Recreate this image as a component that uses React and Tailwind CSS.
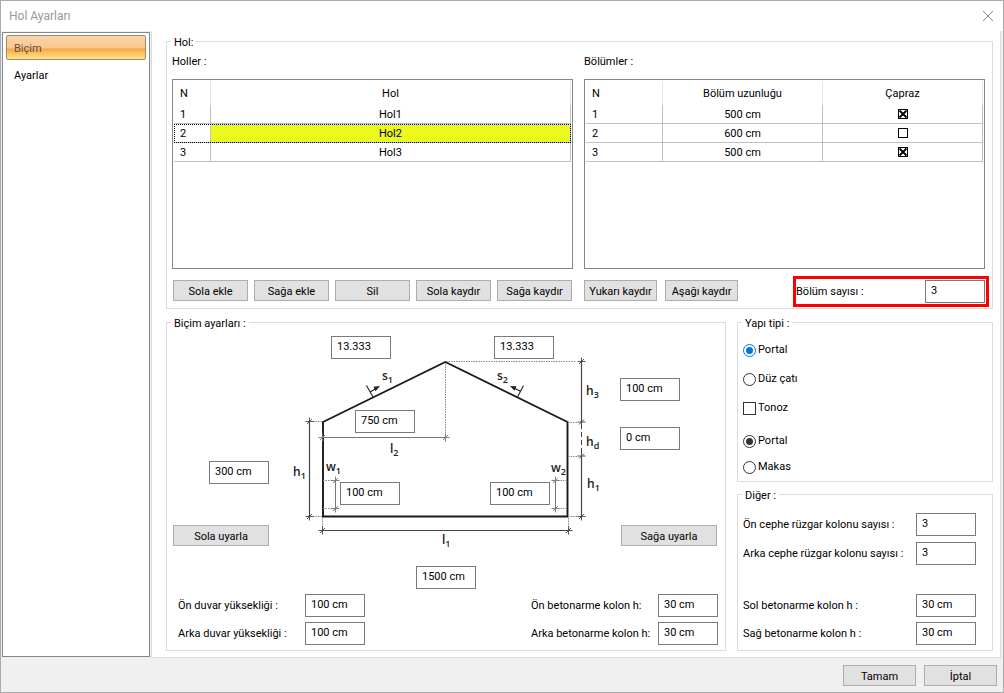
import { useState } from 'react';

const initialHalls = ['Hol1', 'Hol2', 'Hol3'];

const initialSections = [
  { length: '500 cm', cross: true },
  { length: '600 cm', cross: false },
  { length: '500 cm', cross: true },
];

function Button({ className = '', children }) {
  return (
    <button
      type="button"
      className={`h-[21px] border border-[#adadad] bg-[#e1e1e1] pt-[2px] text-center whitespace-nowrap hover:border-[#0078d7] hover:bg-[#e5f1fb] ${className}`}
    >
      {children}
    </button>
  );
}

function Field({ id, label, value, className = '' }) {
  return (
    <input
      id={id}
      type="text"
      aria-label={label}
      defaultValue={value}
      className={`h-[23px] w-[60px] shrink-0 border border-[#7a7a7a] bg-white px-[5px] pb-[2px] outline-none focus:border-[#0078d7] ${className}`}
    />
  );
}

function FieldRow({ id, label, value }) {
  return (
    <div className="flex items-center justify-between">
      <label htmlFor={id}>{label}</label>
      <Field id={id} value={value} />
    </div>
  );
}

function Group({ title, className = '', children }) {
  return (
    <fieldset className={`min-w-0 border border-[#dcdcdc] ${className}`}>
      <legend className="ml-1 px-[3px] pt-[2px] leading-[13px]">{title}</legend>
      {children}
    </fieldset>
  );
}

function Radio({ name, label, accent, defaultChecked }) {
  return (
    <label className="flex h-[14px] items-center gap-[2px]">
      <input
        type="radio"
        name={name}
        defaultChecked={defaultChecked}
        className={`size-[13px] appearance-none rounded-full border border-[#333] bg-white bg-clip-content p-[2px] ${
          accent ? 'checked:border-[#0078d7] checked:bg-[#0078d7]' : 'checked:bg-[#333]'
        }`}
      />
      {label}
    </label>
  );
}

function CrossBox({ label, checked, onChange }) {
  return (
    <span className="mx-auto grid size-[10px]">
      <input
        type="checkbox"
        aria-label={label}
        checked={checked}
        onChange={onChange}
        className="col-start-1 row-start-1 size-[10px] appearance-none border border-black bg-white"
      />
      {checked && (
        <svg viewBox="0 0 10 10" className="pointer-events-none col-start-1 row-start-1 size-[10px]">
          <path d="M1.5 1.5l7 7M8.5 1.5l-7 7" stroke="black" strokeWidth="1.8" />
        </svg>
      )}
    </span>
  );
}

// Crossed end mark of a dimension line
function Tick({ x, y }) {
  return <path d={`M${x - 4} ${y}h8M${x} ${y - 4}v8M${x - 2.5} ${y + 2.5}l5 -5`} strokeWidth="0.9" />;
}

function Sub({ x, y, text, sub }) {
  return (
    <text x={x} y={y}>
      {text}
      <tspan dy="3" fontSize="9">{sub}</tspan>
    </text>
  );
}

function HallDrawing() {
  return (
    <svg viewBox="269 336 351 253" className="h-full w-full" fill="none" stroke="#444">
      <path d="M323 516.5V422L445.3 362L567.5 422V516.5Z" stroke="#1a1a1a" strokeWidth="1.9" />

      {/* helper lines */}
      <g stroke="#888" strokeDasharray="1.5 1">
        <path d="M446 361.5H576M445.5 364V437" />
        <path d="M313 421.5H323M313 516.5H322M568 422.5H577M568 456.5H577M568 516.5H577" />
        <path d="M323 480.5H333M323 508.5H333M558 480.5H567M558 508.5H567" />
        <path d="M322.5 518V529M568.5 518V529" />
      </g>

      {/* dimension lines */}
      <path d="M309.5 421V517M322 530.5H568M581.5 361V422M581.5 456V517" strokeWidth="1.2" />
      <path d="M323 437.5H446M335.5 481V508M555.5 481V508" stroke="#777" />
      <path d="M581.5 424V455" strokeDasharray="5 3" />
      <Tick x={309.5} y={421.5} />
      <Tick x={309.5} y={516.5} />
      <Tick x={322.5} y={530.5} />
      <Tick x={568.5} y={530.5} />
      <Tick x={581.5} y={361.5} />
      <Tick x={581.5} y={422} />
      <Tick x={581.5} y={456} />
      <Tick x={581.5} y={516.5} />
      <g stroke="#777">
        <Tick x={322.5} y={437.5} />
        <Tick x={445.5} y={437.5} />
        <Tick x={335.5} y={480.5} />
        <Tick x={335.5} y={508.5} />
        <Tick x={555.5} y={480.5} />
        <Tick x={555.5} y={508.5} />
      </g>

      {/* slope marks */}
      <path d="M366.5 385.5L373 397M370 392L376 388.5M523.5 385.5L517.5 397M521 391.5L515 388.5" stroke="#222" strokeWidth="1.1" />
      <path d="M380 386L373.5 386.8L375.5 391.2ZM510 386L516.5 386.3L514.5 390.8Z" fill="#222" stroke="none" />

      <g fill="#222" stroke="none" fontSize="12" className="font-['Open_Sans',sans-serif] font-semibold">
        <Sub x={382} y={380} text="s" sub="1" />
        <Sub x={497} y={380} text="s" sub="2" />
        <Sub x={390} y={453} text="l" sub="2" />
        <Sub x={293} y={476} text="h" sub="1" />
        <Sub x={326} y={471} text="w" sub="1" />
        <Sub x={551} y={472} text="w" sub="2" />
        <Sub x={442} y={544} text="l" sub="1" />
        <Sub x={586} y={395} text="h" sub="3" />
        <Sub x={586} y={446} text="h" sub="d" />
        <Sub x={587} y={488} text="h" sub="1" />
      </g>
    </svg>
  );
}

function HallTable({ halls, selected, onSelect }) {
  return (
    <div className="h-[190px] border border-[#828790] p-px">
      <table className="w-full table-fixed border-separate border-spacing-0">
        <thead>
          <tr className="h-[24px]">
            <th className="w-[37px] border-r border-[#e5e5e5] pt-[2px] pl-[6px] text-left font-normal">N</th>
            <th className="border-r border-[#e5e5e5] pt-[2px] font-normal">Hol</th>
          </tr>
        </thead>
        <tbody>
          {halls.map((hall, i) => (
            <tr
              key={hall}
              onClick={() => onSelect(i)}
              className={`h-[19px] ${i === selected ? 'outline-1 -outline-offset-1 outline-dotted outline-black' : ''}`}
            >
              <td className="border-r border-b border-[#c0c0c0] pt-[2px] pl-[6px]">{i + 1}</td>
              <td className={`border-r border-b border-[#c0c0c0] pt-[2px] text-center ${i === selected ? 'bg-[#ebf91e]' : ''}`}>
                {hall}
              </td>
            </tr>
          ))}
        </tbody>
      </table>
    </div>
  );
}

function SectionTable({ sections, onToggle }) {
  return (
    <div className="h-[190px] border border-[#828790] p-px">
      <table className="w-full table-fixed border-separate border-spacing-0">
        <thead>
          <tr className="h-[24px]">
            <th className="w-[77px] border-r border-[#e5e5e5] pt-[2px] pl-[6px] text-left font-normal">N</th>
            <th className="border-r border-[#e5e5e5] pt-[2px] font-normal">Bölüm uzunluğu</th>
            <th className="border-r border-[#e5e5e5] pt-[2px] font-normal">Çapraz</th>
          </tr>
        </thead>
        <tbody>
          {sections.map((section, i) => (
            <tr key={i} className="h-[19px]">
              <td className="border-r border-b border-[#c0c0c0] pt-[2px] pl-[6px]">{i + 1}</td>
              <td className="border-r border-b border-[#c0c0c0] pt-[2px] text-center">{section.length}</td>
              <td className="border-r border-b border-[#c0c0c0]">
                <CrossBox label={`Çapraz ${i + 1}`} checked={section.cross} onChange={() => onToggle(i)} />
              </td>
            </tr>
          ))}
        </tbody>
      </table>
    </div>
  );
}

function App() {
  const [selected, setSelected] = useState(1);
  const [sections, setSections] = useState(initialSections);

  const toggleCross = (index) => {
    setSections(sections.map((s, i) => (i === index ? { ...s, cross: !s.cross } : s)));
  };

  return (
    <div className="flex min-h-screen flex-col border border-[#aaa] bg-[#f0f0f0] font-[Roboto,'Liberation_Sans',sans-serif] text-[11px] leading-[14px] text-black">
      <header className="flex h-[30px] items-center justify-between bg-white pr-[9px] pl-2">
        <h1 className="text-[12px] text-[#999]">Hol Ayarları</h1>
        <button type="button" aria-label="Kapat" className="text-[#888]">
          <svg viewBox="0 0 12 12" className="size-3" fill="none" stroke="currentColor">
            <path d="M1 1l10 10M11 1L1 11" />
          </svg>
        </button>
      </header>

      <div className="flex flex-1 gap-px pr-[2px] pl-px">
        <nav className="mt-px mb-px flex w-[148px] shrink-0 flex-col gap-[2px] border border-[#828790] bg-white px-[3px] py-[2px]">
          <button
            type="button"
            className="h-[25px] rounded-[2px] border border-[#a38a5c] bg-linear-[180deg,#f9d5ae_0%,#fbc78a_52%,#f6a94a_56%,#fdd679_90%,#fde59b_100%] px-[7px] pt-[2px] text-left text-[#5c4f4a]"
          >
            Biçim
          </button>
          <button type="button" className="h-[25px] px-2 pt-[2px] text-left">
            Ayarlar
          </button>
        </nav>

        <main className="flex flex-1 flex-col gap-[6px] border-r border-b border-l border-[#dcdcdc] bg-white pt-[3px] pr-[7px] pb-[6px] pl-[14px]">
          <Group title="Hol:">
            <div className="flex gap-[11px] pt-[6px] pr-[7px] pb-px pl-[5px]">
              <section className="flex flex-1 flex-col">
                <h2 className="mb-[10px]">Holler :</h2>
                <HallTable halls={initialHalls} selected={selected} onSelect={setSelected} />
                <div className="mt-[11px] flex gap-[6px] px-px">
                  <Button className="flex-1">Sola ekle</Button>
                  <Button className="flex-1">Sağa ekle</Button>
                  <Button className="flex-1">Sil</Button>
                  <Button className="flex-1">Sola kaydır</Button>
                  <Button className="flex-1">Sağa kaydır</Button>
                </div>
              </section>

              <section className="flex flex-1 flex-col">
                <h2 className="mb-[10px]">Bölümler :</h2>
                <SectionTable sections={sections} onToggle={toggleCross} />
                <div className="mt-[7px] -mr-1 flex justify-between">
                  <div className="flex gap-2 pt-1">
                    <Button className="w-[73px]">Yukarı kaydır</Button>
                    <Button className="w-[73px]">Aşağı kaydır</Button>
                  </div>
                  <div className="flex h-[31px] w-[196px] items-center justify-between border-3 border-[#f00] pr-px">
                    <label htmlFor="section-count">Bölüm sayısı :</label>
                    <Field id="section-count" value="3" />
                  </div>
                </div>
              </section>
            </div>
          </Group>

          <div className="flex flex-1 gap-[11px]">
            <Group title="Biçim ayarları :" className="flex-1">
              <div className="flex justify-between pt-[6px] pr-2 pl-[6px]">
                <div className="flex w-24 flex-col items-end justify-between pt-[125px] pb-[43px]">
                  <Field label="h1" value="300 cm" />
                  <Button className="w-full">Sola uyarla</Button>
                </div>

                <div className="relative h-[253px] w-[351px] shrink-0">
                  <HallDrawing />
                  <Field label="s1" value="13.333" className="absolute top-0 left-[62px]" />
                  <Field label="s2" value="13.333" className="absolute top-0 left-[225px]" />
                  <Field label="l2" value="750 cm" className="absolute top-[74px] left-[86px]" />
                  <Field label="w1" value="100 cm" className="absolute top-[146px] left-[71px]" />
                  <Field label="w2" value="100 cm" className="absolute top-[146px] left-[221px]" />
                  <Field label="l1" value="1500 cm" className="absolute top-[230px] left-[147px]" />
                </div>

                <div className="flex w-[97px] flex-col pt-[42px] pb-[43px]">
                  <Field label="h3" value="100 cm" />
                  <Field label="hd" value="0 cm" className="mt-[26px] mb-auto" />
                  <Button className="ml-px">Sağa uyarla</Button>
                </div>
              </div>

              <div className="flex justify-between pt-[5px] pr-[7px] pb-[5px] pl-[11px]">
                <div className="flex w-[187px] flex-col gap-[5px]">
                  <FieldRow id="front-wall" label="Ön duvar yüksekliği :" value="100 cm" />
                  <FieldRow id="back-wall" label="Arka duvar yüksekliği :" value="100 cm" />
                </div>
                <div className="flex w-[187px] flex-col gap-[5px]">
                  <FieldRow id="front-column" label="Ön betonarme kolon h:" value="30 cm" />
                  <FieldRow id="back-column" label="Arka betonarme kolon h:" value="30 cm" />
                </div>
              </div>
            </Group>

            <div className="flex w-[256px] shrink-0 flex-col gap-[5px]">
              <Group title="Yapı tipi :" className="flex-1">
                <div className="flex flex-col gap-[15px] px-[5px] pt-[13px]">
                  <Radio name="roof" label="Portal" accent defaultChecked />
                  <Radio name="roof" label="Düz çatı" accent />
                  <label className="flex h-[14px] items-center gap-[2px]">
                    <input type="checkbox" className="size-[13px] appearance-none border border-[#333] bg-white checked:bg-[#333]" />
                    Tonoz
                  </label>
                </div>
                <div className="flex flex-col gap-3 px-[5px] pt-[19px] pb-[7px]">
                  <Radio name="frame" label="Portal" defaultChecked />
                  <Radio name="frame" label="Makas" />
                </div>
              </Group>

              <Group title="Diğer :">
                <div className="flex flex-col gap-[6px] pt-[11px] pr-4 pl-[5px]">
                  <FieldRow id="front-wind" label="Ön cephe rüzgar kolonu sayısı :" value="3" />
                  <FieldRow id="back-wind" label="Arka cephe rüzgar kolonu sayısı :" value="3" />
                </div>
                <div className="flex flex-col gap-[5px] pt-[29px] pr-4 pb-[5px] pl-[5px]">
                  <FieldRow id="left-column" label="Sol betonarme kolon h :" value="30 cm" />
                  <FieldRow id="right-column" label="Sağ betonarme kolon h :" value="30 cm" />
                </div>
              </Group>
            </div>
          </div>
        </main>
      </div>

      <footer className="flex justify-end gap-2 pt-[7px] pr-[6px] pb-[6px]">
        <Button className="w-[73px]">Tamam</Button>
        <Button className="w-[73px]">İptal</Button>
      </footer>
    </div>
  );
}

export default App;
